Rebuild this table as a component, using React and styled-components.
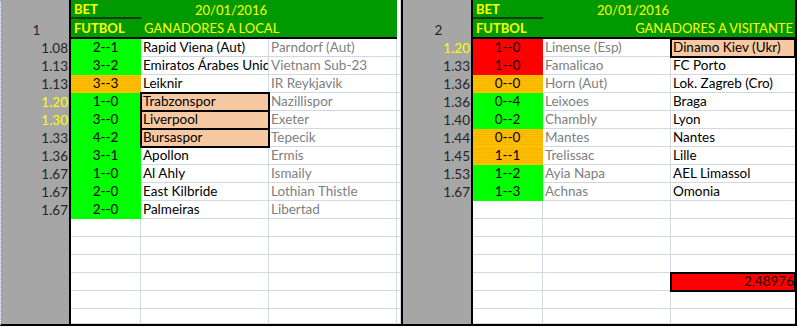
import React from "react";
import styled, { createGlobalStyle, css } from "styled-components";

const GRID = "#d0d7e5";
const GREEN_HEAD = "#009a00";
const YELLOW = "#ffff00";

const GlobalStyle = createGlobalStyle`
  *, *::before, *::after { box-sizing: border-box; }
  html, body { margin: 0; padding: 0; background: #ffffff; overflow: hidden; }
  body { font-family: Lato, "Open Sans", "Liberation Sans", sans-serif; }
`;

const Sheet = styled.div`
  display: flex;
  align-items: flex-start;
  width: 798px;
  height: 327px;
  overflow: hidden;
`;

const Panel = styled.div`
  display: grid;
  grid-template-columns: ${(p) => p.$cols};
  grid-template-rows: 19px 20px repeat(15, 18px) 15px;
  border-bottom: 2px solid #000;
  border-left: ${(p) => (p.$boxed ? "2px solid #000" : `1px dotted #9fb3d6`)};
  border-right: ${(p) => (p.$boxed ? "2px solid #000" : "none")};
  font-size: 13.5px;
`;

const RowHead = styled.div`
  background: #a6a6a6;
  border-right: 2px solid #000;
  display: flex;
  align-items: center;
  justify-content: flex-end;
  padding-right: 1px;
  line-height: 17px;
  color: ${(p) => (p.$hot ? YELLOW : "#262626")};
`;

const SheetLabel = styled(RowHead)`
  grid-row: span 2;
  justify-content: center;
  align-items: flex-end;
  padding: 0 0 0 3px;
  color: #262626;
`;

const HeadCell = styled.div`
  background: ${GREEN_HEAD};
  color: ${YELLOW};
  font-size: 13px;
  font-weight: ${(p) => (p.$bold ? 700 : 400)};
  display: flex;
  align-items: center;
  justify-content: ${(p) => p.$align || "flex-start"};
  padding: 0 ${(p) => (p.$align === "flex-end" ? "2px" : "0")} 0 3px;
  grid-column: span ${(p) => p.$span || 1};
  white-space: nowrap;
  ${(p) =>
    p.$rule &&
    css`
      border-bottom: 2px solid #0f3d0f;
    `}
  ${(p) =>
    p.$closing &&
    css`
      border-bottom: 2px solid #000;
    `}
`;

const Spacer = styled.div`
  background: #fff;
  border-right: 1px solid ${GRID};
  border-bottom: ${(p) => (p.$head ? "none" : `1px solid ${GRID}`)};
`;

const fills = {
  green: css`
    background: #00ff00;
    border-color: transparent;
  `,
  orange: css`
    background: repeating-linear-gradient(
      to bottom,
      #ffc000 0px,
      #ffc000 1px,
      #f4b400 1px,
      #f4b400 2px
    );
    border-color: transparent;
  `,
  red: css`
    background: #ff0000;
    border-color: transparent;
  `,
};

const Score = styled.div`
  border-right: 1px solid ${GRID};
  border-bottom: 1px solid ${GRID};
  line-height: 17px;
  text-align: center;
  color: #000;
  ${(p) => p.$fill && fills[p.$fill]}
`;

const Team = styled.div`
  position: relative;
  border-right: ${(p) => (p.$last ? "none" : `1px solid ${GRID}`)};
  border-bottom: 1px solid ${GRID};
  line-height: 17px;
  padding-left: 2px;
  white-space: nowrap;
  overflow: hidden;
  color: ${(p) => (p.$muted ? "#808080" : "#000000")};
  ${(p) =>
    p.$mark &&
    css`
      overflow: visible;
      z-index: 1;
      background-color: #fbd3b0;
      background-image: radial-gradient(#efbd92 0.6px, transparent 0.8px);
      background-size: 2px 2px;
      outline: 2px solid #000;
      outline-offset: -1px;
      color: #000;
    `}
`;

const Total = styled(Team)`
  overflow: visible;
  z-index: 1;
  background: #ff0000;
  outline: 2px solid #000;
  outline-offset: -1px;
  text-align: right;
  padding: 0 1px 0 0;
  color: #2a0000;
`;

const leftRows = [
  ["1.08", "2--1", "green", "Rapid Viena (Aut)", "Parndorf (Aut)"],
  ["1.13", "3--2", "green", "Emiratos Árabes Unidos", "Vietnam Sub-23"],
  ["1.13", "3--3", "orange", "Leiknir", "IR Reykjavik"],
  ["1.20", "1--0", "green", "Trabzonspor", "Nazillispor", true, true],
  ["1.30", "3--0", "green", "Liverpool", "Exeter", true, true],
  ["1.33", "4--2", "green", "Bursaspor", "Tepecik", false, true],
  ["1.36", "3--1", "green", "Apollon", "Ermis"],
  ["1.67", "1--0", "green", "Al Ahly", "Ismaily"],
  ["1.67", "2--0", "green", "East Kilbride", "Lothian Thistle"],
  ["1.67", "2--0", "green", "Palmeiras", "Libertad"],
];

const rightRows = [
  ["1.20", "1--0", "red", "Linense (Esp)", "Dinamo Kiev (Ukr)", true, true],
  ["1.33", "1--0", "red", "Famalicao", "FC Porto"],
  ["1.36", "0--0", "orange", "Horn (Aut)", "Lok. Zagreb (Cro)"],
  ["1.36", "0--4", "green", "Leixoes", "Braga"],
  ["1.40", "0--2", "green", "Chambly", "Lyon"],
  ["1.44", "0--0", "orange", "Mantes", "Nantes"],
  ["1.45", "1--1", "orange", "Trelissac", "Lille"],
  ["1.53", "1--2", "green", "Ayia Napa", "AEL Limassol"],
  ["1.67", "1--3", "green", "Achnas", "Omonia"],
];

const TOTAL_ROWS = 16;

function LeftSheet() {
  const body = [];
  for (let i = 0; i < TOTAL_ROWS; i++) {
    const r = leftRows[i];
    body.push(
      <React.Fragment key={i}>
        <RowHead $hot={r && r[5]}>{r ? r[0] : ""}</RowHead>
        <Score $fill={r && r[2]}>{r ? r[1] : ""}</Score>
        <Team $mark={r && r[6]}>{r ? r[3] : ""}</Team>
        <Team $muted>{r ? r[4] : ""}</Team>
        <Spacer />
      </React.Fragment>
    );
  }
  return (
    <Panel $cols="70px 70px 128px 128px 4px">
      <SheetLabel>1</SheetLabel>
      <HeadCell $bold $rule>BET</HeadCell>
      <HeadCell $align="flex-end">20/01/2016</HeadCell>
      <HeadCell />
      <Spacer $head />
      <HeadCell $bold $closing>FUTBOL</HeadCell>
      <HeadCell $span={2} $closing>GANADORES A LOCAL</HeadCell>
      <Spacer $head />
      {body}
    </Panel>
  );
}

function RightSheet() {
  const body = [];
  for (let i = 0; i < TOTAL_ROWS; i++) {
    const r = rightRows[i];
    body.push(
      <React.Fragment key={i}>
        <RowHead $hot={r && r[5]}>{r ? r[0] : ""}</RowHead>
        <Score $fill={r && r[2]}>{r ? r[1] : ""}</Score>
        <Team $muted>{r ? r[3] : ""}</Team>
        {i === 13 ? (
          <Total $last>2,48976</Total>
        ) : (
          <Team $last $mark={r && r[6]}>{r ? r[4] : ""}</Team>
        )}
      </React.Fragment>
    );
  }
  return (
    <Panel $boxed $cols="70px 70px 128px 124px">
      <SheetLabel>2</SheetLabel>
      <HeadCell $bold $rule>BET</HeadCell>
      <HeadCell $align="flex-end">20/01/2016</HeadCell>
      <HeadCell />
      <HeadCell $bold $closing>FUTBOL</HeadCell>
      <HeadCell $span={2} $closing $align="flex-end">
        GANADORES A VISITANTE
      </HeadCell>
      {body}
    </Panel>
  );
}

export default function App() {
  return (
    <>
      <GlobalStyle />
      <Sheet>
        <LeftSheet />
        <RightSheet />
      </Sheet>
    </>
  );
}
